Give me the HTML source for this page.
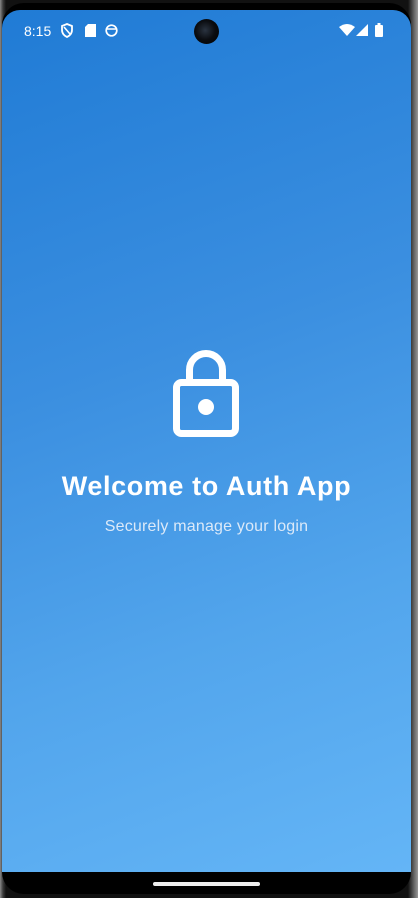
<!DOCTYPE html>
<html><head><style>
html,body{margin:0;padding:0;}
body{width:418px;height:898px;background:#1a1a1a;position:relative;overflow:hidden;font-family:"Liberation Sans",sans-serif;}
.frame{position:absolute;left:0;top:0;width:418px;height:898px;background:linear-gradient(90deg,#8a8a8a 0,#3a3a3a 3px,#111 6px,#111 408px,#555 413px,#999 418px);}
.phone{position:absolute;left:2px;top:3px;width:409px;height:891px;background:#000;border-radius:22px;overflow:hidden;}
.screen{position:absolute;left:0;top:7px;width:409px;height:862px;border-radius:18px 18px 0 0;background:linear-gradient(160deg,#207bd5 0%,#3b8fe0 40%,#52a5ec 70%,#64b5f6 100%);}
.bar{position:absolute;left:153px;top:882px;width:107px;height:4px;border-radius:2px;background:#eee;}
.st{position:absolute;color:#fff;font-size:14px;top:23px;}
.cam{position:absolute;left:194px;top:19px;width:25px;height:25px;border-radius:50%;background:radial-gradient(circle at 45% 45%,#2a3340 0,#0a0c10 50%,#000 100%);}
h1{position:absolute;left:0;width:413px;top:471px;margin:0;text-align:center;color:#fff;font-size:27px;font-weight:bold;letter-spacing:0.6px;}
p{position:absolute;left:0;width:413px;top:518px;margin:0;text-align:center;color:#dbe9f8;font-size:16px;letter-spacing:0.2px;}
</style></head><body>
<div class="frame"></div>
<div class="phone"><div class="screen"></div></div>
<div class="bar"></div>
<div class="st" style="left:24px">8:15</div>
<svg style="position:absolute;left:60px;top:23px" width="14" height="15" viewBox="0 0 14 15"><path d="M7 1 L12 3 V7 C12 10.5 9.5 13 7 14 C4.5 13 2 10.5 2 7 V3 Z" fill="none" stroke="#fff" stroke-width="1.8"/><path d="M4 4 L10 11" stroke="#fff" stroke-width="1.6"/></svg>
<svg style="position:absolute;left:85px;top:24px" width="11" height="13"><path d="M3 0 H11 V13 H0 V3 Z" fill="#fff"/></svg>
<svg style="position:absolute;left:105px;top:24px" width="13" height="13"><circle cx="6.5" cy="6.5" r="5.3" fill="none" stroke="#fff" stroke-width="1.7"/><path d="M2 5 H11" stroke="#fff" stroke-width="1.5"/></svg>
<div class="cam"></div>
<svg style="position:absolute;left:339px;top:24px" width="16" height="12"><path d="M0 3 Q8 -3 16 3 L8 12 Z" fill="#fff"/></svg>
<svg style="position:absolute;left:356px;top:24px" width="12" height="12"><path d="M12 0 V12 H0 Z" fill="#fff"/></svg>
<svg style="position:absolute;left:375px;top:23px" width="8" height="14"><rect x="2.5" y="0" width="3" height="2" fill="#fff"/><rect x="0" y="2" width="8" height="12" rx="1" fill="#fff"/></svg>
<svg style="position:absolute;left:170px;top:348px" width="72" height="92" viewBox="0 0 72 92"><path d="M19.5 34 V22 A16.5 16.5 0 0 1 52.5 22 V34" fill="none" stroke="#fff" stroke-width="7"/><rect x="6.5" y="34.5" width="59" height="51" rx="5" fill="none" stroke="#fff" stroke-width="7"/><circle cx="36" cy="59" r="8" fill="#fff"/></svg>
<h1>Welcome to Auth App</h1>
<p>Securely manage your login</p>
</body></html>
